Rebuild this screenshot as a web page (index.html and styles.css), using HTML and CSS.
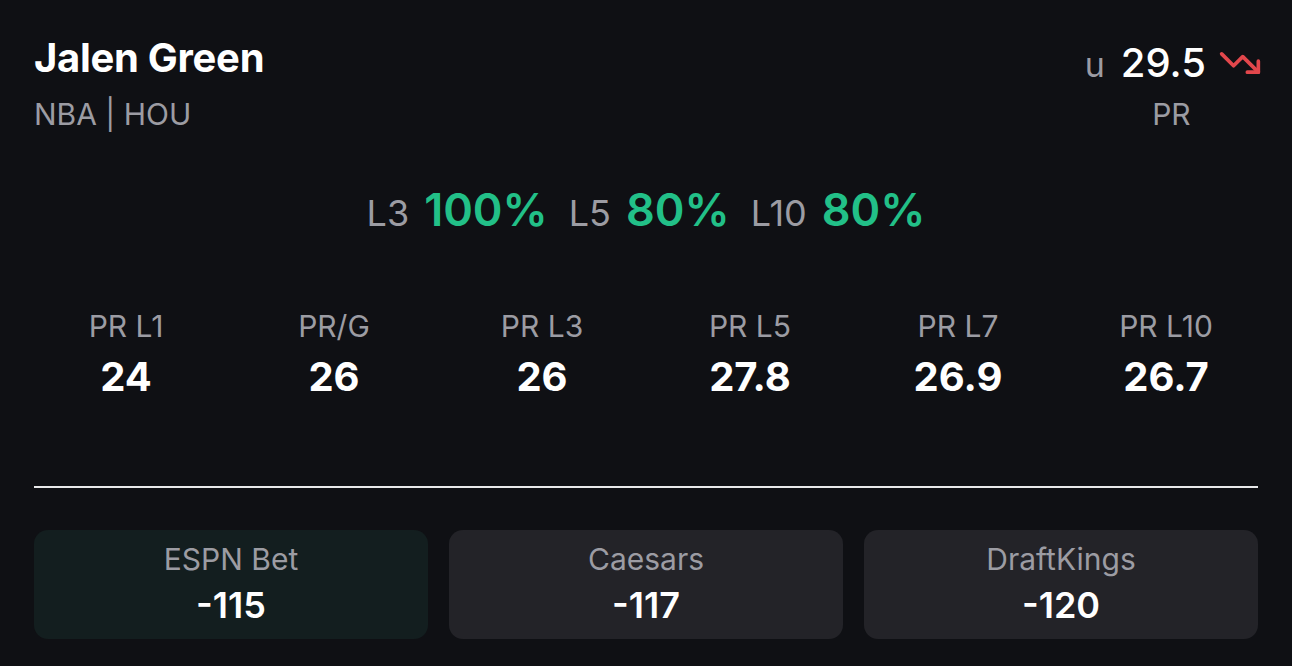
FILE: index.html
```html
<!DOCTYPE html>
<html lang="en">
<head>
    <meta charset="UTF-8">
    <meta name="viewport" content="width=device-width, initial-scale=1.0">
    <title>Jalen Green</title>
    <link rel="stylesheet" href="styles.css">
</head>
<body>
    <div class="prop-card">
        <div class="prop-head">
            <div class="player">
                <div class="player-name">Jalen Green</div>
                <div class="player-meta">NBA | HOU</div>
            </div>
            <div class="line">
                <div class="line-top">
                    <span class="line-side">u</span>
                    <span class="line-num">29.5</span>
                    <svg class="trend" viewBox="0 0 24 24" fill="none" stroke="currentColor" stroke-width="2" stroke-linecap="round" stroke-linejoin="round">
                        <polyline points="22 17 13.5 8.5 8.5 13.5 2 7"></polyline>
                        <polyline points="16 17 22 17 22 11"></polyline>
                    </svg>
                </div>
                <div class="line-market">PR</div>
            </div>
        </div>

        <div class="hit-rates">
            <span class="hit-label">L3</span><span class="hit-value">100%</span>
            <span class="hit-label">L5</span><span class="hit-value">80%</span>
            <span class="hit-label">L10</span><span class="hit-value">80%</span>
        </div>

        <div class="stats">
            <div class="stat"><div class="stat-label">PR L1</div><div class="stat-value">24</div></div>
            <div class="stat"><div class="stat-label">PR/G</div><div class="stat-value">26</div></div>
            <div class="stat"><div class="stat-label">PR L3</div><div class="stat-value">26</div></div>
            <div class="stat"><div class="stat-label">PR L5</div><div class="stat-value">27.8</div></div>
            <div class="stat"><div class="stat-label">PR L7</div><div class="stat-value">26.9</div></div>
            <div class="stat"><div class="stat-label">PR L10</div><div class="stat-value">26.7</div></div>
        </div>

        <div class="divider"></div>

        <div class="books">
            <div class="book book-best">
                <div class="book-name">ESPN Bet</div>
                <div class="book-odds">-115</div>
            </div>
            <div class="book">
                <div class="book-name">Caesars</div>
                <div class="book-odds">-117</div>
            </div>
            <div class="book">
                <div class="book-name">DraftKings</div>
                <div class="book-odds">-120</div>
            </div>
        </div>
    </div>
</body>
</html>
```

FILE: styles.css
```css
* {
    padding: 0;
    margin: 0;
    box-sizing: border-box;
}

body {
    background: #0f1014;
    color: #ffffff;
    font-family: Inter, "Noto Sans", sans-serif;
}

.prop-card {
    padding: 34px 34px 0 34px;
}

.prop-head {
    display: flex;
    justify-content: space-between;
    align-items: flex-start;
}

.player-name {
    font-size: 40px;
    line-height: 48px;
    font-weight: 700;
    letter-spacing: -0.3px;
}

.player-meta {
    margin-top: 14px;
    font-size: 30px;
    line-height: 36px;
    color: #9c9ca3;
}

.line {
    display: flex;
    flex-direction: column;
    align-items: center;
}

.line-top {
    display: flex;
    align-items: baseline;
    padding-top: 5px;
    height: 53px;
}

.line-side {
    font-size: 34px;
    line-height: 48px;
    color: #9c9ca3;
    margin-right: 16px;
}

.line-num {
    font-size: 40px;
    line-height: 48px;
    font-weight: 500;
}

.trend {
    width: 44px;
    height: 44px;
    color: #e2474c;
    margin-left: 12px;
    margin-right: -4px;
    align-self: flex-start;
    margin-top: 2px;
}

.line-market {
    margin-top: 9px;
    font-size: 30px;
    line-height: 36px;
    color: #9c9ca3;
}

.hit-rates {
    margin-top: 54px;
    display: flex;
    justify-content: center;
    align-items: baseline;
    line-height: 48px;
}

.hit-label {
    font-size: 36px;
    color: #9c9ca3;
    margin-right: 15px;
}

.hit-value {
    font-size: 45px;
    font-weight: 600;
    color: #22c088;
    margin-right: 21px;
}

.hit-value:last-child {
    margin-right: 0;
}

.stats {
    margin: 71px -12px 0 -12px;
    display: grid;
    grid-template-columns: repeat(6, 1fr);
    text-align: center;
}

.stat-label {
    font-size: 30px;
    line-height: 36px;
    color: #9c9ca3;
}

.stat-value {
    margin-top: 9px;
    font-size: 40px;
    line-height: 48px;
    font-weight: 700;
}

.divider {
    margin-top: 85px;
    height: 2px;
    background: #e8e8ea;
}

.books {
    margin-top: 42px;
    display: grid;
    grid-template-columns: repeat(3, 1fr);
    gap: 21px;
}

.book {
    height: 109px;
    padding-top: 11px;
    border-radius: 14px;
    background: #232328;
    text-align: center;
}

.book-best {
    background: #131e1f;
}

.book-name {
    font-size: 30px;
    line-height: 36px;
    color: #9c9ca3;
}

.book-odds {
    margin-top: 6px;
    font-size: 36px;
    line-height: 44px;
    font-weight: 600;
}
```
